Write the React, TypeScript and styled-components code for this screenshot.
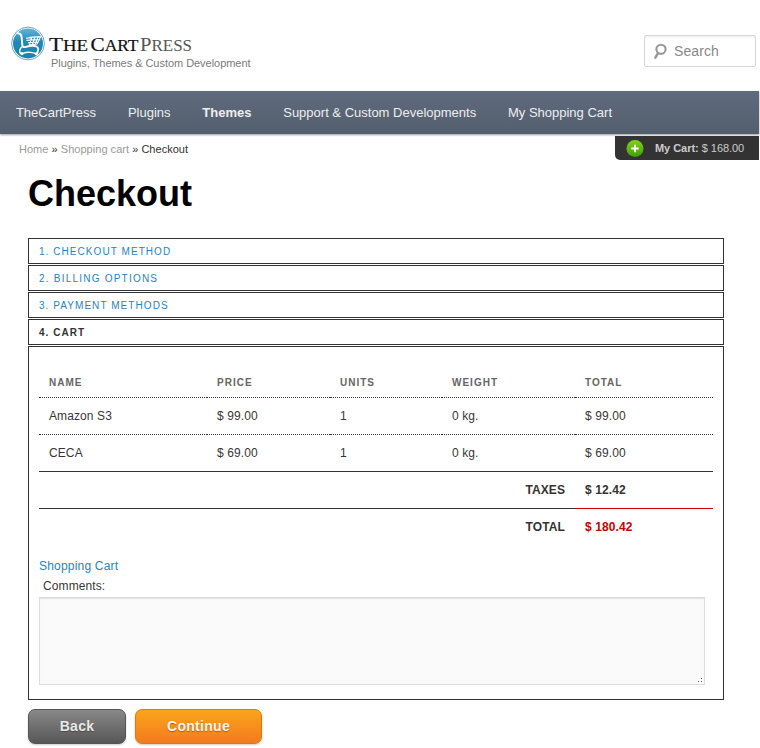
import React from "react";
import styled, { createGlobalStyle, css } from "styled-components";

const Global = createGlobalStyle`
  *, *::before, *::after { box-sizing: border-box; }
  html, body { margin: 0; padding: 0; background: #fff; }
  body {
    width: 760px;
    height: 748px;
    overflow: hidden;
    font-family: "Liberation Sans", Arial, sans-serif;
    font-size: 12px;
    color: #373737;
  }
`;

const Page = styled.div`
  width: 760px;
  height: 748px;
  display: flex;
  flex-direction: column;
`;

const Header = styled.header`
  height: 91px;
  display: flex;
  justify-content: space-between;
  padding: 26px 4px 0 10px;
`;

const Brand = styled.div`
  display: flex;
  gap: 2px;
`;

const BrandText = styled.div`
  display: flex;
  flex-direction: column;
  padding-top: 7px;
`;

const Tagline = styled.span`
  font-size: 11px;
  line-height: 13px;
  letter-spacing: -0.04px;
  color: #7a7a7a;
  padding-left: 2px;
  margin-top: -1px;
  white-space: nowrap;
`;

const SearchBox = styled.label`
  display: flex;
  align-items: center;
  width: 112px;
  height: 32px;
  margin-top: 9px;
  padding-left: 8px;
  gap: 7px;
  border: 1px solid #d9d9d9;
  border-radius: 2px;
  box-shadow: inset 0 1px 2px rgba(0, 0, 0, 0.08);
`;

const SearchInput = styled.input`
  width: 76px;
  padding: 0;
  border: 0;
  outline: 0;
  background: transparent;
  font: 14px "Liberation Sans", Arial, sans-serif;
  letter-spacing: 0.1px;
  color: #888;
  &::placeholder { color: #888; opacity: 1; }
`;

const Nav = styled.nav`
  width: 759px;
  height: 43px;
  flex: none;
  display: flex;
  align-items: center;
  background: linear-gradient(#5f6b7e, #535f6d);
  box-shadow: 0 1px 2px rgba(0, 0, 0, 0.4);
`;

const NavLink = styled.a<{ $active?: boolean }>`
  padding: 0 15.9px;
  font-size: 13px;
  line-height: 43px;
  color: #eee;
  white-space: nowrap;
  font-weight: ${(p) => (p.$active ? "bold" : "normal")};
`;

const SubBar = styled.div`
  width: 759px;
  height: 26px;
  flex: none;
  display: flex;
  justify-content: space-between;
  padding-top: 2px;
`;

const Crumbs = styled.div`
  padding: 7px 0 0 19px;
  font-size: 11px;
  line-height: 13px;
  letter-spacing: 0.03px;
  color: #333;
  a { color: #999; }
`;

const MiniCart = styled.div`
  display: flex;
  align-items: center;
  width: 144px;
  height: 24px;
  padding: 0 0 1px 11px;
  gap: 11px;
  border-radius: 0 0 0 5px;
  background: #333;
  color: #ccc;
  font-size: 11px;
  letter-spacing: -0.04px;
  white-space: nowrap;
`;

const Title = styled.h1`
  margin: 11px 0 0 28px;
  height: 45px;
  line-height: 46px;
  font-size: 36px;
  font-weight: bold;
  color: #000;
`;

const Main = styled.main`
  width: 696px;
  margin: 22px 0 0 28px;
  display: flex;
  flex-direction: column;
  gap: 1px;
`;

const Step = styled.h3<{ $current?: boolean; $tracking: number }>`
  margin: 0;
  height: 26px;
  padding-left: 10px;
  border: 1px solid #333;
  font-size: 10px;
  line-height: 25px;
  letter-spacing: ${(p) => p.$tracking}px;
  text-transform: uppercase;
  font-weight: ${(p) => (p.$current ? "bold" : "normal")};
  color: ${(p) => (p.$current ? "#333" : "#1b85c8")};
`;

const Panel = styled.section`
  height: 354px;
  border: 1px solid #333;
  padding: 20px 10px 0;
  display: flex;
  flex-direction: column;
  letter-spacing: 0.1px;
`;

const Table = styled.table`
  width: 674px;
  table-layout: fixed;
  border-collapse: separate;
  border-spacing: 0;
`;

const Col = styled.col<{ $w: number }>`
  width: ${(p) => p.$w}px;
`;

const cell = css`
  height: 37px;
  padding: 0 10px;
  text-align: left;
  line-height: 18px;
  vertical-align: middle;
`;

const HeadCell = styled.th`
  ${cell}
  height: 30px;
  padding-top: 1px;
  font-size: 10px;
  letter-spacing: 1px;
  color: #666;
  text-transform: uppercase;
`;

const Cell = styled.td`
  ${cell}
  border-top: 1px dotted #333;
`;

const SumCell = styled.td<{ $label?: boolean; $grand?: boolean }>`
  ${cell}
  font-weight: bold;
  text-align: ${(p) => (p.$label ? "right" : "left")};
  color: ${(p) => (p.$grand ? "#c00" : "#333")};
  border-top: 1px solid ${(p) => (p.$grand ? "#c00" : "#333")};
`;

const CartLink = styled.a`
  margin-top: 11px;
  line-height: 20px;
  letter-spacing: 0.2px;
  color: #1b85c8;
`;

const CommentLabel = styled.label`
  padding-left: 4px;
  line-height: 20px;
`;

const Comments = styled.textarea`
  width: 666px;
  height: 88px;
  border: 1px solid #ddd;
  background: #fafafa;
  box-shadow: inset 0 1px 1px rgba(0, 0, 0, 0.1);
  resize: none;
  outline: 0;
  display: block;
`;

const CommentBox = styled.div`
  position: relative;
  width: 666px;
  margin-top: 1px;
`;

const Grip = styled.svg`
  position: absolute;
  right: 2px;
  bottom: 2px;
`;

const Actions = styled.div`
  display: flex;
  gap: 9px;
  margin: 9px 0 0 28px;
`;

const Button = styled.button<{ $primary?: boolean }>`
  width: ${(p) => (p.$primary ? 127 : 98)}px;
  height: 35px;
  padding: 0 0 2px;
  border: 1px solid ${(p) => (p.$primary ? "#da7c0c" : "#555")};
  border-radius: 7px;
  background: ${(p) =>
    p.$primary ? "linear-gradient(#faa51a, #f47a20)" : "linear-gradient(#888, #575757)"};
  box-shadow: 0 1px 2px rgba(0, 0, 0, 0.2);
  color: ${(p) => (p.$primary ? "#fef4e9" : "#e9e9e9")};
  font: bold 14px "Liberation Sans", Arial, sans-serif;
  letter-spacing: 0.3px;
  text-shadow: 0 1px 1px rgba(0, 0, 0, 0.3);
`;

const LogoMark = () => (
  <svg width="37" height="36" viewBox="0 0 37 36" aria-hidden="true">
    <defs>
      <linearGradient id="disc" x1="0" y1="0" x2="0" y2="1">
        <stop offset="0" stopColor="#5fb4d6" />
        <stop offset="0.45" stopColor="#2088b6" />
        <stop offset="1" stopColor="#1583b2" />
      </linearGradient>
    </defs>
    <circle cx="18" cy="17.5" r="16.4" fill="#fff" stroke="#6ba7ca" strokeWidth="1" />
    <circle cx="18" cy="17.5" r="15" fill="url(#disc)" />
    <path
      d="M8 7.2c2.6.2 3.4 1.4 3.6 3.8l.7 7.6c.2 2.4 1.2 3 3.6 2.3 4.2-1.3 8-1.5 10.5-.4 2.2 1 2.3 3.4.8 6.5"
      fill="none"
      stroke="#fff"
      strokeWidth="1.9"
      strokeLinecap="round"
    />
    <path d="M12.3 20.5c-2.6 1.8-3.6 5.6-1.3 7.4M13 27.4c4-1.6 8.6-1.4 13.4.4" fill="none" stroke="#fff" strokeWidth="1.4" />
    <circle cx="12" cy="27.6" r="1.6" fill="#fff" />
    <circle cx="26.3" cy="27.8" r="1.6" fill="#fff" />
    <path
      d="M16 12.3l5-.7M19.5 11.2l11.3-.6M16.5 14.4l13-.9M18 16.7l10.3-.7M18.8 18.7l8-.5M21.8 11.2l-2.2 7.4M25 11l-2.6 7.5M28.2 10.8l-3 7.5M30.8 10.6l-3.8 7.7"
      fill="none"
      stroke="#fff"
      strokeWidth="1.1"
    />
  </svg>
);

const Wordmark = () => (
  <svg width="146" height="25" viewBox="0 0 146 25" fontFamily='"Liberation Serif", serif' stroke="#111" strokeWidth="0.2">
    <text x="0" y="17.5" fontSize="19.5" fill="#111" textLength="39" lengthAdjust="spacingAndGlyphs">
      T<tspan fontSize="16">HE</tspan>
    </text>
    <text x="41.5" y="17.5" fontSize="19.5" fill="#111" textLength="48" lengthAdjust="spacingAndGlyphs">
      C<tspan fontSize="16">ART</tspan>
    </text>
    <text x="91" y="17.5" fontSize="19.5" fill="#555" stroke="none" textLength="52" lengthAdjust="spacingAndGlyphs">
      P<tspan fontSize="16">RESS</tspan>
    </text>
  </svg>
);

const Magnifier = () => (
  <svg width="14" height="17" viewBox="0 0 14 17" aria-hidden="true">
    <circle cx="8" cy="6.3" r="4.6" fill="none" stroke="#999" strokeWidth="2.1" />
    <path d="M5 10.2L2.4 14.6" stroke="#999" strokeWidth="2.6" strokeLinecap="round" />
  </svg>
);

const PlusBadge = () => (
  <svg width="18" height="18" viewBox="0 0 18 18" aria-hidden="true">
    <defs>
      <linearGradient id="plus" x1="0" y1="0" x2="0" y2="1">
        <stop offset="0" stopColor="#86d21c" />
        <stop offset="1" stopColor="#3c9f08" />
      </linearGradient>
    </defs>
    <circle cx="9" cy="9.5" r="8.5" fill="url(#plus)" />
    <path d="M9 5.8v7.4M5.3 9.5h7.4" stroke="#fff" strokeWidth="2" />
  </svg>
);

const navItems = ["TheCartPress", "Plugins", "Themes", "Support & Custom Developments", "My Shopping Cart"];
const steps = [
  { label: "1. Checkout method", tracking: 1.06 },
  { label: "2. Billing options", tracking: 1.22 },
  { label: "3. Payment methods", tracking: 1.06 },
  { label: "4. Cart", tracking: 1.05 },
];
const columns = [
  { name: "Name", width: 168 },
  { name: "Price", width: 123 },
  { name: "Units", width: 112 },
  { name: "Weight", width: 133 },
  { name: "Total", width: 138 },
];
const rows = [
  ["Amazon S3", "$ 99.00", "1", "0 kg.", "$ 99.00"],
  ["CECA", "$ 69.00", "1", "0 kg.", "$ 69.00"],
];

export default function App() {
  return (
    <Page>
      <Global />
      <Header>
        <Brand>
          <LogoMark />
          <BrandText>
            <Wordmark />
            <Tagline>Plugins, Themes &amp; Custom Development</Tagline>
          </BrandText>
        </Brand>
        <SearchBox>
          <Magnifier />
          <SearchInput placeholder="Search" />
        </SearchBox>
      </Header>
      <Nav>
        {navItems.map((item) => (
          <NavLink key={item} $active={item === "Themes"}>{item}</NavLink>
        ))}
      </Nav>
      <SubBar>
        <Crumbs>
          <a>Home</a> » <a>Shopping cart</a> » Checkout
        </Crumbs>
        <MiniCart>
          <PlusBadge />
          <span><b>My Cart:</b> $ 168.00</span>
        </MiniCart>
      </SubBar>
      <Title>Checkout</Title>
      <Main>
        {steps.map((step, i) => (
          <Step key={step.label} $current={i === 3} $tracking={step.tracking}>{step.label}</Step>
        ))}
        <Panel>
          <Table>
            <colgroup>
              {columns.map((c) => <Col key={c.name} $w={c.width} />)}
            </colgroup>
            <thead>
              <tr>{columns.map((c) => <HeadCell key={c.name}>{c.name}</HeadCell>)}</tr>
            </thead>
            <tbody>
              {rows.map((row) => (
                <tr key={row[0]}>{row.map((v, i) => <Cell key={i}>{v}</Cell>)}</tr>
              ))}
              <tr>
                <SumCell $label colSpan={4}>TAXES</SumCell>
                <SumCell>$ 12.42</SumCell>
              </tr>
              <tr>
                <SumCell $label colSpan={4}>TOTAL</SumCell>
                <SumCell $grand>$ 180.42</SumCell>
              </tr>
            </tbody>
          </Table>
          <CartLink>Shopping Cart</CartLink>
          <CommentLabel htmlFor="comments">Comments:</CommentLabel>
          <CommentBox>
            <Comments id="comments" />
            <Grip width="6" height="6" viewBox="0 0 6 6" fill="#555">
              <rect x="4" y="1" width="1" height="1" />
              <rect x="1" y="4" width="1" height="1" />
              <rect x="4" y="4" width="1" height="1" />
            </Grip>
          </CommentBox>
        </Panel>
      </Main>
      <Actions>
        <Button>Back</Button>
        <Button $primary>Continue</Button>
      </Actions>
    </Page>
  );
}
